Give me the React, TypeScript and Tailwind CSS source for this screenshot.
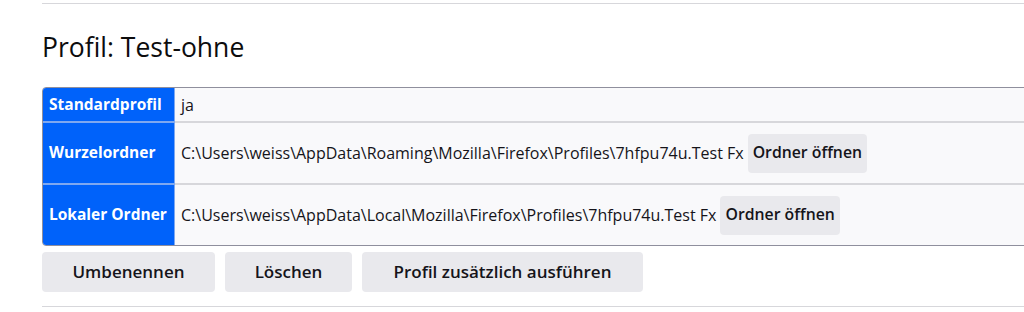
const rows = [
  { label: "Standardprofil", value: "ja", button: false },
  {
    label: "Wurzelordner",
    value: "C:\\Users\\weiss\\AppData\\Roaming\\Mozilla\\Firefox\\Profiles\\7hfpu74u.Test Fx",
    button: true,
  },
  {
    label: "Lokaler Ordner",
    value: "C:\\Users\\weiss\\AppData\\Local\\Mozilla\\Firefox\\Profiles\\7hfpu74u.Test Fx",
    button: true,
  },
];

export default function App() {
  return (
    <div
      className="h-[312px] w-[1024px] overflow-hidden bg-white text-[#15141a]"
      style={{ fontFamily: '"Open Sans", "Noto Sans", sans-serif' }}
    >
      <div className="ml-[42px] w-[1100px]">
        <div className="mt-[3px] border-t border-[#d7d7db]" />
        <h2 className="mt-[26px] text-[26.5px] leading-[34px] font-normal text-[#0c0c0d]">Profil: Test-ohne</h2>
        <table className="mt-[23px] w-full border-separate border-spacing-0 overflow-hidden rounded-[4px] border border-[#8f8f9d] text-[16px]">
          <tbody>
            {rows.map((r, i) => (
              <tr key={r.label} className={r.button ? "h-[62px]" : "h-[33px]"}>
                <th
                  className={`w-[132px] border-r border-[#7ea8f0] bg-[#0062fa] px-[6px] text-left text-[15.5px] font-bold whitespace-nowrap text-white ${
                    i > 0 ? "border-t-2 border-t-[#7ea8f0]" : ""
                  }`}
                >
                  {r.label}
                </th>
                <td
                  className={`bg-[#f9f9fb] px-[6px] whitespace-nowrap ${
                    i > 0 ? "border-t-2 border-t-[#d7d7db]" : ""
                  }`}
                >
                  <div className="flex items-center gap-[4px]">
                    <span>{r.value}</span>
                    {r.button && (
                      <button className="h-[39px] rounded-[4px] bg-[#e9e9ed] px-[5px] text-[15.8px] font-semibold">
                        Ordner öffnen
                      </button>
                    )}
                  </div>
                </td>
              </tr>
            ))}
          </tbody>
        </table>
        <div className="mt-[6px] flex gap-[10px] text-[17px] font-semibold">
          <button className="h-[40px] w-[173px] rounded-[4px] bg-[#e9e9ed]">Umbenennen</button>
          <button className="h-[40px] w-[127px] rounded-[4px] bg-[#e9e9ed]">Löschen</button>
          <button className="h-[40px] w-[281px] rounded-[4px] bg-[#e9e9ed]">Profil zusätzlich ausführen</button>
        </div>
        <div className="mt-[14px] border-t border-[#d7d7db]" />
      </div>
    </div>
  );
}
